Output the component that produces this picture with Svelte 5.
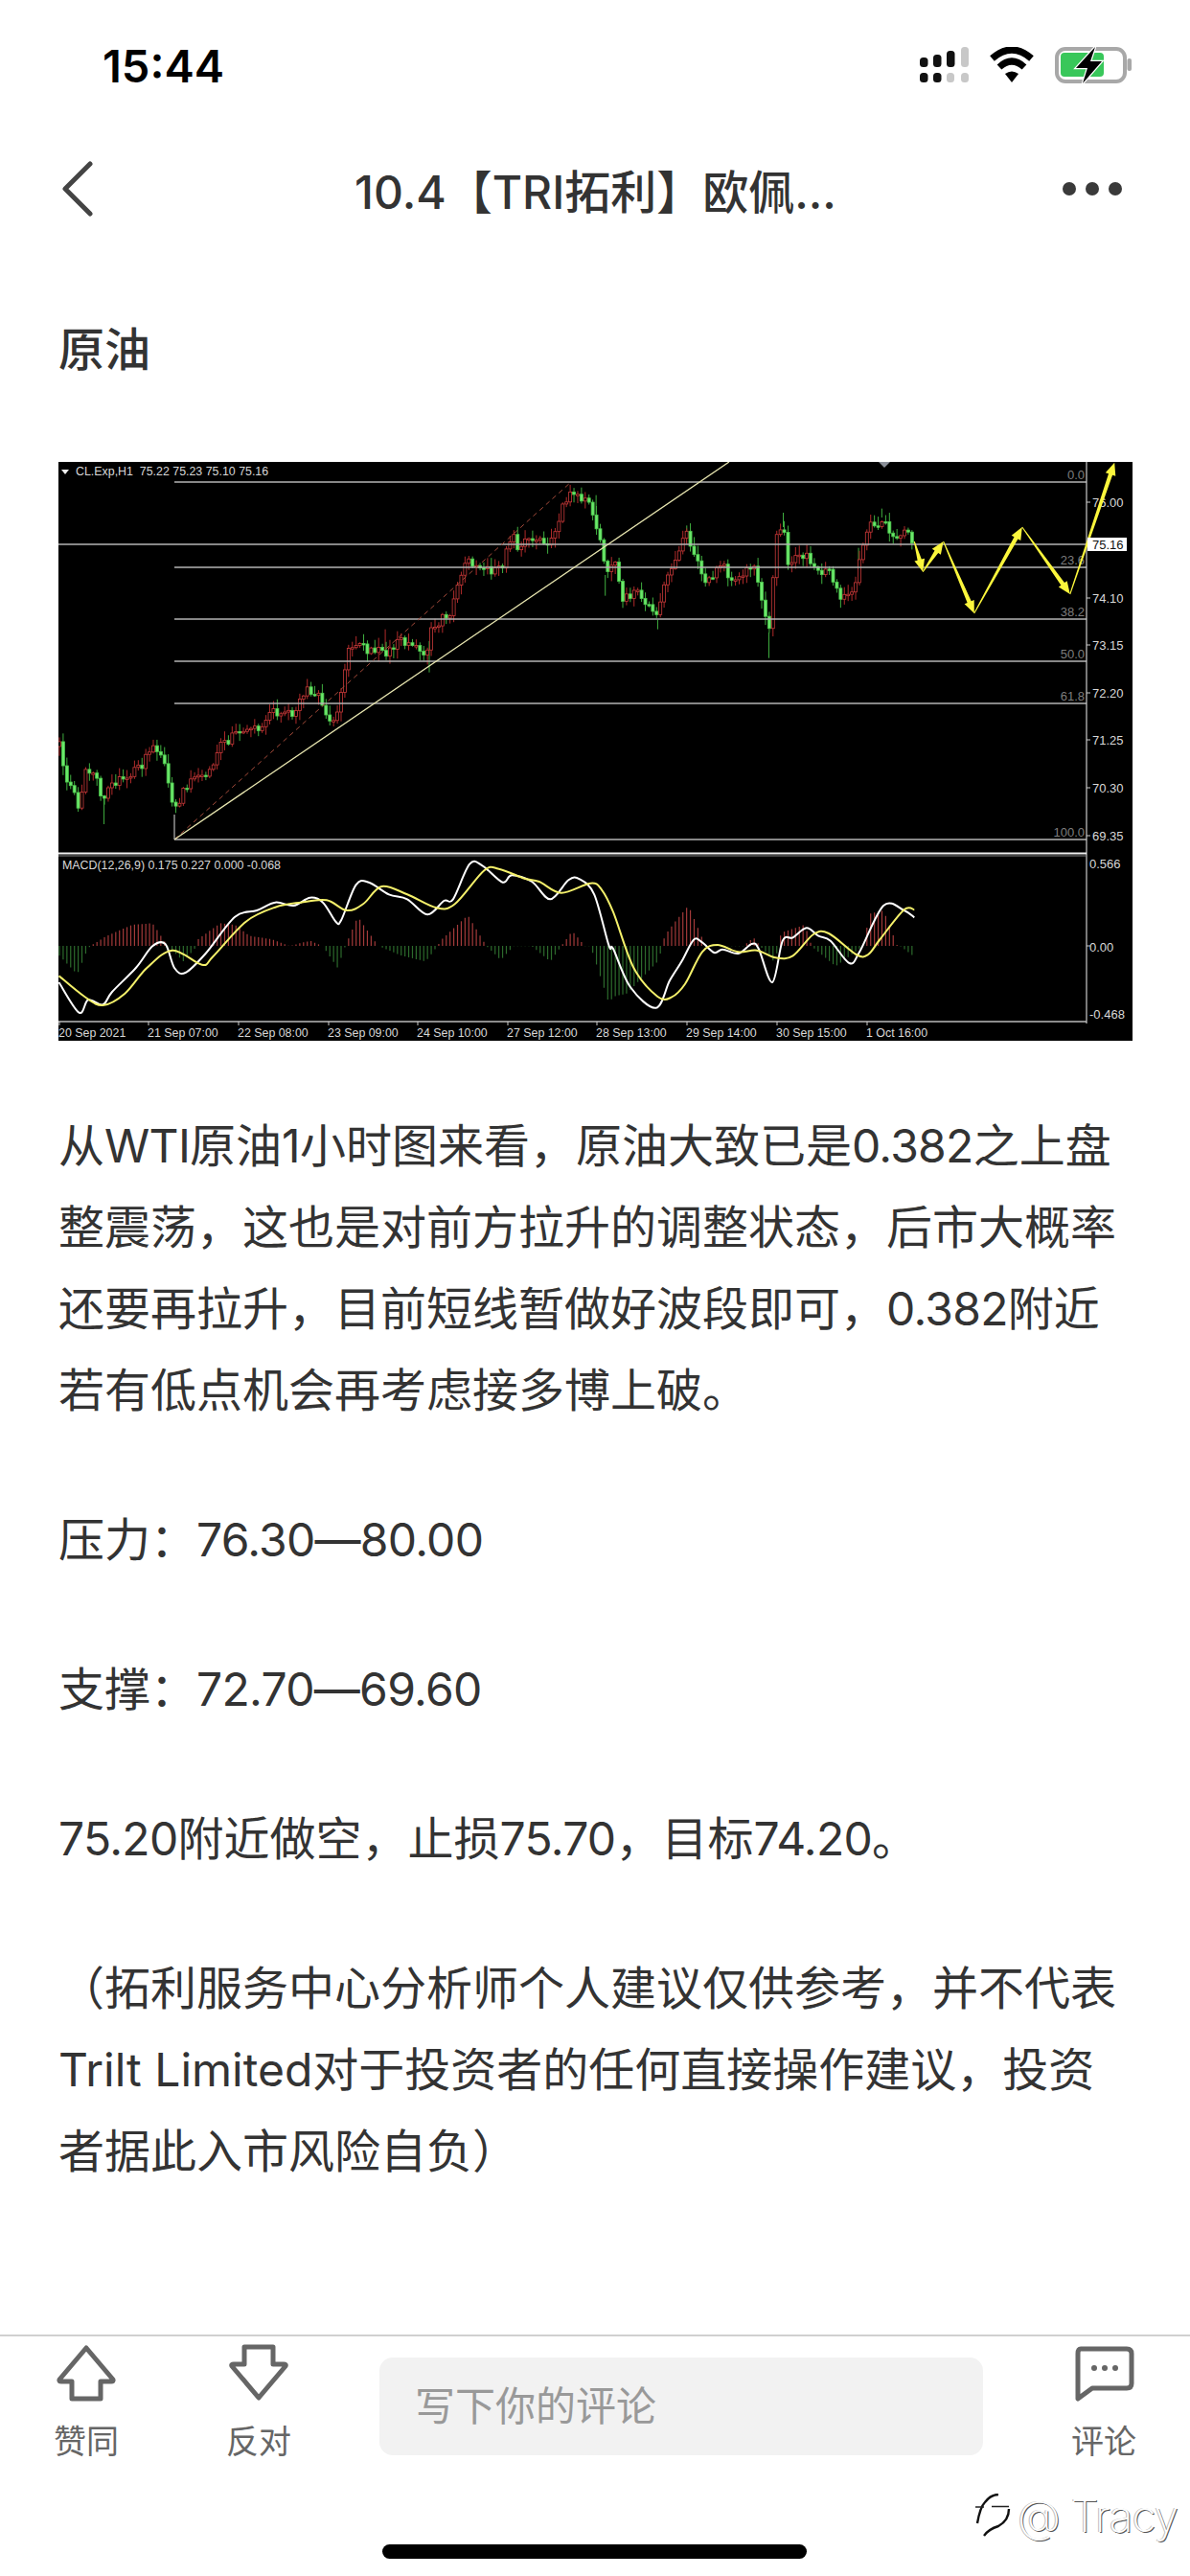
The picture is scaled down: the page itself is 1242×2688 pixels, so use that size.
<script>
  // zoom-crop coordinates -> page pixels (crops were stretched on x)
  const zl = ([x, y]) => [x / 2.613 + 50, y / 3 + 470];
  const zr = ([x, y]) => [x / 2.8 + 640, y / 3 + 470];
  const ml = ([x, y]) => [x / 2.613 + 50, y / 3 + 870];
  const mr = ([x, y]) => [x / 2.8 + 640, y / 3 + 870];

  const pricePath = [
    ...[[30,920],[50,1020],[85,1120],[100,1010],[125,1000],[150,1090],[165,1040],[200,1030],[250,995],[285,935],[320,980],[345,1140],[360,1090],[400,1010],[430,1015],[470,930],[510,890],[540,890],[580,860],[605,810],[640,825],[680,820],[690,755],[730,755],[775,850],[800,770],[820,620],[850,615],[880,625],[925,630],[960,600],[1000,600],[1030,650],[1045,570],[1075,520],[1100,510],[1110,430],[1140,345],[1165,365],[1210,380],[1240,370],[1265,250],[1285,310],[1310,260],[1365,310],[1400,190],[1425,140],[1480,170],[1510,300],[1520,390],[1548,350]].map(zl),
    ...[[30,470],[60,440],[110,490],[130,530],[150,420],[215,260],[245,350],[270,420],[320,360],[345,420],[380,400],[410,340],[435,480],[455,570],[475,260],[497,240],[510,360],[565,320],[600,390],[635,370],[660,470],[700,440],[750,220],[770,250],[785,210],[815,270],[860,260],[880,285]].map(zr)
  ];

  const histPath = [
    ...[[30,380],[80,440],[105,370],[115,352],[125,345],[160,320],[230,285],[285,280],[320,340],[330,355],[370,400],[400,360],[410,330],[470,280],[510,285],[550,320],[610,330],[660,352],[680,345],[715,335],[750,352],[790,420],[810,355],[845,260],[900,350],[960,380],[1030,400],[1060,355],[1075,330],[1145,255],[1195,350],[1235,395],[1270,352],[1320,352],[1370,400],[1400,352],[1430,305],[1465,352],[1480,352],[1530,530]].map(ml),
    ...[[0,510],[40,500],[130,400],[145,352],[150,320],[185,270],[220,225],[270,352],[280,352],[380,352],[410,325],[430,352],[470,400],[485,352],[490,310],[560,285],[580,352],[650,415],[730,352],[750,250],[790,240],[830,350],[840,352],[880,385]].map(mr)
  ];

  const macd = [
    ...[[30,465],[85,560],[110,520],[150,535],[175,495],[240,420],[285,352],[320,345],[345,420],[375,435],[430,375],[510,260],[570,240],[620,215],[670,225],[715,200],[750,215],[785,275],[800,270],[840,160],[875,152],[930,190],[980,205],[1035,253],[1080,210],[1105,205],[1150,95],[1185,100],[1240,152],[1265,130],[1320,150],[1370,205],[1420,145],[1450,142],[1490,190],[1530,350]].map(ml),
    ...[[0,360],[50,480],[125,545],[165,460],[200,400],[235,332],[260,340],[295,372],[320,362],[365,375],[405,345],[425,360],[465,465],[495,335],[525,325],[565,295],[600,320],[635,335],[690,405],[720,370],[790,225],[850,240],[880,262]].map(mr)
  ];

  const signal = [
    ...[[30,445],[100,510],[150,537],[210,500],[270,420],[340,365],[420,410],[450,385],[540,275],[620,230],[690,215],[760,208],[815,240],[860,220],[910,165],[980,190],[1060,232],[1110,220],[1190,115],[1230,110],[1300,140],[1340,150],[1400,185],[1480,155],[1510,175]].map(ml),
    ...[[0,245],[60,420],[130,510],[170,512],[210,470],[260,370],[305,348],[365,370],[420,365],[475,388],[525,382],[585,315],[630,312],[710,378],[745,378],[780,330],[850,238],[880,238]].map(mr)
  ];

  // catmull-rom through the traced points, so the indicator lines aren't angular
  function smooth(list) {
    let d = `M${list[0][0].toFixed(1)} ${list[0][1].toFixed(1)}`;
    for (let i = 0; i < list.length - 1; i++) {
      const p0 = list[i - 1] || list[i];
      const p1 = list[i];
      const p2 = list[i + 1];
      const p3 = list[i + 2] || p2;
      const c1x = p1[0] + (p2[0] - p0[0]) / 6;
      const c1y = p1[1] + (p2[1] - p0[1]) / 6;
      const c2x = p2[0] - (p3[0] - p1[0]) / 6;
      const c2y = p2[1] - (p3[1] - p1[1]) / 6;
      d += ` C${c1x.toFixed(1)} ${c1y.toFixed(1)} ${c2x.toFixed(1)} ${c2y.toFixed(1)} ${p2[0].toFixed(1)} ${p2[1].toFixed(1)}`;
    }
    return d;
  }

  function at(path, x) {
    for (let i = 1; i < path.length; i++) {
      if (x <= path[i][0]) {
        const [x0, y0] = path[i - 1];
        const [x1, y1] = path[i];
        return y0 + ((y1 - y0) * (x - x0)) / (x1 - x0 || 1);
      }
    }
    return path[path.length - 1][1];
  }

  let seed = 41;
  const rnd = () => (seed = (seed * 16807) % 2147483647) / 2147483647;

  const candles = [];
  let prev = at(pricePath, 62);
  for (let x = 62; x < 954; x += 3.92) {
    const close = at(pricePath, x) + (rnd() - 0.5) * 10;
    const top = Math.min(prev, close);
    const bottom = Math.max(prev, close);
    candles.push({
      x,
      up: close < prev,
      top,
      h: Math.max(bottom - top, 1.5),
      hi: top - rnd() * 9 - 1,
      lo: bottom + rnd() * 9 + 1
    });
    prev = close;
  }

  // the long wicks that stand out in the reference
  const spikes = [
    [...zl([153, 1170]), 1], [...zl([920, 560]), -1], [...zl([1040, 695]), 1], [...zl([1495, 140]), -1],
    [...zl([1520, 455]), 1], [...zr([455, 650]), 1], [...zr([497, 195]), -1], [...zr([215, 235]), -1],
    [...zr([130, 560]), 1], [...zr([785, 182]), -1], [...zr([717, 305]), -1]
  ].map(([x, y, dir]) => ({ x, y, from: at(pricePath, x), green: dir > 0 || x > 600 }));

  const bars = [];
  for (let x = 62; x < 954; x += 3.92) {
    const y = at(histPath, x);
    bars.push({ x, y, up: y < 987 });
  }

  // hand-drawn forecast arrows: thin tail, thick head
  function arrow([x1, y1], [x2, y2]) {
    const len = Math.hypot(x2 - x1, y2 - y1);
    const ux = (x2 - x1) / len, uy = (y2 - y1) / len;
    const nx = -uy, ny = ux;
    const nx2 = x2 - ux * 13, ny2 = y2 - uy * 13;
    const p = (x, y, s) => `${(x + nx * s).toFixed(1)},${(y + ny * s).toFixed(1)}`;
    return [p(x1, y1, 0.5), p(nx2, ny2, 2.2), p(nx2, ny2, 5.5), p(x2, y2, 0), p(nx2, ny2, -5.5), p(nx2, ny2, -2.2), p(x1, y1, -0.5)].join(" ");
  }
  const route = [[880,285],[905,380],[965,285],[1055,510],[1195,240],[1335,450],[1465,38]].map(zr);
  const arrows = route.slice(1).map((p, i) => arrow(route[i], p));

  const fibs = [
    { y: 503, label: "0.0" },
    { y: 592, label: "23.6" },
    { y: 646, label: "38.2" },
    { y: 690, label: "50.0" },
    { y: 734, label: "61.8" },
    { y: 876, label: "100.0" }
  ];
  const prices = [["76.00", 524], ["74.10", 624], ["73.15", 673], ["72.20", 723], ["71.25", 772], ["70.30", 822], ["69.35", 872]];
  const dates = [["20 Sep 2021", 61], ["21 Sep 07:00", 154], ["22 Sep 08:00", 248], ["23 Sep 09:00", 342], ["24 Sep 10:00", 435], ["27 Sep 12:00", 529], ["28 Sep 13:00", 622], ["29 Sep 14:00", 716], ["30 Sep 15:00", 810], ["1 Oct 16:00", 904]];

  // "|" marks where a line wraps, so no run of text spans two lines
  const paragraphs = [
    "从WTI原油1小时图来看，原油大致已是0.382之上盘|整震荡，这也是对前方拉升的调整状态，后市大概率|还要再拉升，目前短线暂做好波段即可，0.382附近|若有低点机会再考虑接多博上破。",
    "压力：76.30—80.00",
    "支撑：72.70—69.60",
    "75.20附近做空，止损75.70，目标74.20。",
    "（拓利服务中心分析师个人建议仅供参考，并不代表|Trilt Limited对于投资者的任何直接操作建议，投资|者据此入市风险自负）"
  ];
  // digits run a touch narrower than Inter's
  const pieces = (text) => text.split(/(WTI|[\d.—]+)|\|/).filter(Boolean);
  const isNumeric = (s) => /^(WTI|[\d.—]+)$/.test(s);
</script>

<div class="page">
  <header class="status">
    <span class="time">15:44</span>
    <div class="status-icons">
      <svg width="52" height="37" viewBox="0 0 52 37">
        <g fill="#111">
          <rect x="1" y="11" width="8.5" height="10" rx="3.5" />
          <rect x="15" y="8" width="8.5" height="13" rx="3.5" />
          <rect x="29" y="4" width="8.5" height="17" rx="3.5" />
          <rect x="1" y="27" width="8.5" height="10" rx="3.5" />
          <rect x="15" y="27" width="8.5" height="10" rx="3.5" />
        </g>
        <g fill="#c8c8c8">
          <rect x="44" y="0" width="8" height="21" rx="3.5" />
          <rect x="29" y="27" width="8" height="10" rx="3.5" />
          <rect x="44" y="27" width="8" height="10" rx="3.5" />
        </g>
      </svg>
      <svg width="46" height="37" viewBox="0 0 46 37">
        <path d="M2.5 12 Q23 -6 43.5 12" fill="none" stroke="#000" stroke-width="7" />
        <path d="M10 21 Q23 9 36 21" fill="none" stroke="#000" stroke-width="7" />
        <path d="M16 28 Q23 23 30 28 L23 37 Z" fill="#000" />
      </svg>
      <svg width="80" height="38" viewBox="0 0 80 38">
        <rect x="2" y="2" width="71" height="34" rx="9" fill="#fff" stroke="#a8a8a8" stroke-width="4" />
        <rect x="75.5" y="12" width="4.5" height="13" rx="2" fill="#a8a8a8" />
        <rect x="6" y="6" width="45" height="25" rx="4" fill="#38c75a" />
        <polygon points="42,0 22,22 34,22 29,38 49,15 37,15" fill="#000" stroke="#fff" stroke-width="2.5" paint-order="stroke" />
      </svg>
    </div>
  </header>

  <nav class="nav">
    <svg class="back" width="36" height="58" viewBox="0 0 36 58">
      <path d="M32 3 L6 29 L32 55" fill="none" stroke="#444" stroke-width="5" stroke-linecap="round" stroke-linejoin="round" />
    </svg>
    <h1 class="title">10.4【TRI拓利】欧佩...</h1>
    <div class="more"><i></i><i></i><i></i></div>
  </nav>

  <main class="article">
    <h2 class="heading">原油</h2>

    <svg class="chart" width="1121" height="604" viewBox="61 482 1121 604">
      <rect x="61" y="482" width="1121" height="604" fill="#000" />

      {#each spikes as s}
        <line x1={s.x} x2={s.x} y1={s.from} y2={s.y} stroke={s.green ? "#3fae3f" : "#b02a2a"} stroke-width="1" />
      {/each}
      {#each candles as c}
        <line x1={c.x} x2={c.x} y1={c.hi} y2={c.lo} stroke={c.up ? "#b02a2a" : "#3fae3f"} stroke-width="1" />
        <rect
          x={c.x - 1.5}
          y={c.top}
          width="3"
          height={c.h}
          fill={c.up ? "#000" : "#6be86b"}
          stroke={c.up ? "#c93a3a" : "#4cc94c"}
          stroke-width="0.8"
        />
      {/each}

      <line x1="61" x2="1134" y1="568" y2="568" class="level" />
      {#each fibs as f}
        <line x1="182" x2="1134" y1={f.y} y2={f.y} class="level" />
        <text x="1132" y={f.y - 3} class="fib">{f.label}</text>
      {/each}
      <line x1="182" y1="876" x2="596" y2="503" stroke="#a34a3a" stroke-width="1" stroke-dasharray="5 4" />
      <line x1="182" y1="876" x2="761" y2="482" stroke="#e8e6b0" stroke-width="1.3" />
      <line x1="182" y1="876" x2="182" y2="850" stroke="#ddd" stroke-width="1" />
      <polygon points="917,482 929,482 923,488" fill="#8a8f98" />

      <polygon points="64,490 72,490 68,495" fill="#eee" />
      <text x="79" y="496" class="axis small">CL.Exp,H1  75.22 75.23 75.10 75.16</text>

      <line x1="1134" x2="1134" y1="482" y2="1068" stroke="#ccc" stroke-width="1.2" />
      {#each prices as [label, y]}
        <line x1="1134" x2="1138" y1={y} y2={y} stroke="#ccc" />
        <text x="1140" y={y + 5} class="axis">{label}</text>
      {/each}

      {#each arrows as a}
        <polygon points={a} fill="#fbf63c" />
      {/each}

      <rect x="1135" y="561" width="41" height="14" fill="#fff" />
      <text x="1140" y="573" class="axis dark">75.16</text>

      <line x1="60" x2="1134" y1="890.5" y2="890.5" stroke="#eee" stroke-width="2" />
      <line x1="60" x2="1134" y1="893" y2="893" stroke="#888" stroke-width="1" />

      {#each bars as b}
        <line x1={b.x} x2={b.x} y1="987" y2={b.y} stroke={b.up ? "#a33a3a" : "#2c6a2c"} stroke-width="1.2" />
      {/each}
      <path d={smooth(macd)} fill="none" stroke="#fff" stroke-width="2" />
      <path d={smooth(signal)} fill="none" stroke="#f4f06a" stroke-width="2" />

      <text x="65" y="907" class="axis small">MACD(12,26,9) 0.175 0.227 0.000 -0.068</text>
      <text x="1137" y="906" class="axis">0.566</text>
      <text x="1137" y="993" class="axis">0.00</text>
      <text x="1137" y="1063" class="axis">-0.468</text>
      <line x1="1134" x2="1138" y1="987" y2="987" stroke="#ccc" />

      <line x1="61" x2="1134" y1="1066" y2="1066" stroke="#bbb" stroke-width="1.4" />
      {#each dates as [label, x]}
        <line x1={x + 1} x2={x + 1} y1="1066" y2="1070" stroke="#ccc" />
        <text x={x} y="1082" class="axis small">{label}</text>
      {/each}
    </svg>

    <div class="body">
      {#each paragraphs as p}
        <p>{#each pieces(p) as piece}<span class:num={isNumeric(piece)}>{piece}</span>{/each}</p>
      {/each}
    </div>
  </main>

  <footer class="bar">
    <div class="actions">
      <button class="action">
        <svg width="64" height="60" viewBox="0 0 64 60">
          <path d="M32 4 L60 37 Q61 39 58 39 H47 V57 H17 V39 H6 Q3 39 4 37 Z" fill="none" stroke="#666" stroke-width="5" stroke-linejoin="round" />
        </svg>
        <span>赞同</span>
      </button>
      <button class="action">
        <svg width="64" height="60" viewBox="0 0 64 60">
          <path d="M32 56 L60 23 Q61 21 58 21 H47 V3 H17 V21 H6 Q3 21 4 23 Z" fill="none" stroke="#666" stroke-width="5" stroke-linejoin="round" />
        </svg>
        <span>反对</span>
      </button>
      <div class="input">写下你的评论</div>
      <button class="action">
        <svg width="64" height="60" viewBox="0 0 64 60">
          <path d="M8 5 H56 Q61 5 61 10 V41 Q61 46 56 46 H20 L5 57 V10 Q5 5 8 5 Z" fill="none" stroke="#666" stroke-width="5" stroke-linejoin="round" />
          <circle cx="22" cy="25" r="3" fill="#666" />
          <circle cx="33" cy="25" r="3" fill="#666" />
          <circle cx="44" cy="25" r="3" fill="#666" />
        </svg>
        <span>评论</span>
      </button>
    </div>
    <div class="home"></div>
  </footer>

  <div class="watermark">
    <svg width="38" height="46" viewBox="0 0 38 46">
      <path d="M2 31 Q5 14 10 9 Q16 1 24 1" fill="none" stroke="#111" stroke-width="2.4" />
      <path d="M0 14 H9 M17 13.5 H35" fill="none" stroke="#222" stroke-width="1.6" />
      <path d="M35 16 Q35 28 24 34 Q14 37 9 44" fill="none" stroke="#111" stroke-width="2.4" />
    </svg>
    <span>@ Tracy</span>
  </div>
</div>

<style>
  :global(body) {
    margin: 0;
    background: #fff;
  }

  .page {
    position: relative;
    display: flex;
    flex-direction: column;
    width: 1242px;
    height: 2688px;
    overflow: hidden;
    background: #fff;
    color: #333;
    font-family: Inter, "Noto Sans CJK SC", sans-serif;
  }

  .status {
    display: flex;
    align-items: flex-start;
    justify-content: space-between;
    height: 134px;
    padding: 49px 61px 0 107px;
    box-sizing: border-box;
  }
  .time {
    color: #000;
    font-size: 47px;
    font-weight: 600;
    line-height: 40px;
  }
  .status-icons {
    display: flex;
    align-items: flex-start;
    gap: 22px;
  }

  .nav {
    display: flex;
    align-items: center;
    justify-content: space-between;
    height: 126px;
    padding: 0 71px 0 62px;
  }
  .title {
    margin: 0 0 0 36px;
    font-size: 48px;
    font-weight: 500;
  }
  .more {
    display: flex;
    gap: 10px;
  }
  .more i {
    width: 14px;
    height: 14px;
    border-radius: 50%;
    background: #3a3a3a;
  }

  .article {
    flex: 1;
    padding: 62px 60px 0 61px;
  }
  .heading {
    margin: 0 0 75px;
    font-size: 48px;
    font-weight: 500;
    line-height: 85px;
  }
  .chart {
    display: block;
  }
  .level {
    stroke: #b5b5b5;
    stroke-width: 1.3;
  }
  .fib {
    fill: #7d7d7d;
    font: 13px "Liberation Sans", sans-serif;
    text-anchor: end;
  }
  .axis {
    fill: #d8d8d8;
    font: 13px "Liberation Sans", sans-serif;
  }
  .axis.small {
    font-size: 12.4px;
    white-space: pre;
  }
  .axis.dark {
    fill: #111;
  }

  .body {
    margin-top: 67px;
    display: flex;
    flex-direction: column;
    gap: 71px;
    font-size: 48px;
    line-height: 85px;
  }
  .body p {
    margin: 0;
  }
  .num {
    letter-spacing: -0.7px;
  }

  .bar {
    height: 252px;
    border-top: 2px solid #d0d0d0;
    box-sizing: border-box;
  }
  .actions {
    display: flex;
    align-items: flex-start;
    padding: 8px 0 0 50px;
  }
  .action {
    display: flex;
    flex-direction: column;
    align-items: center;
    gap: 22px;
    width: 80px;
    padding: 0;
    border: 0;
    background: none;
    color: #666;
    font: inherit;
    font-size: 34px;
    line-height: 40px;
    white-space: nowrap;
  }
  .action + .action {
    margin-left: 100px;
  }
  .input {
    flex: none;
    width: 630px;
    height: 102px;
    margin: 14px 86px 0;
    padding-left: 37px;
    box-sizing: border-box;
    border-radius: 14px;
    background: #f2f2f2;
    color: #999;
    font-size: 42px;
    line-height: 102px;
  }
  .home {
    width: 443px;
    height: 15px;
    margin: 87px 0 0 399px;
    border-radius: 8px;
    background: #000;
  }

  .watermark {
    position: absolute;
    left: 1018px;
    top: 2602px;
    display: flex;
    align-items: flex-start;
    gap: 6px;
    color: #fff;
    font-size: 46px;
    font-weight: 200;
    letter-spacing: -1px;
    line-height: 46px;
    text-shadow: 1px 1px 0 #555, -1px 0 0 #bbb;
  }
</style>
